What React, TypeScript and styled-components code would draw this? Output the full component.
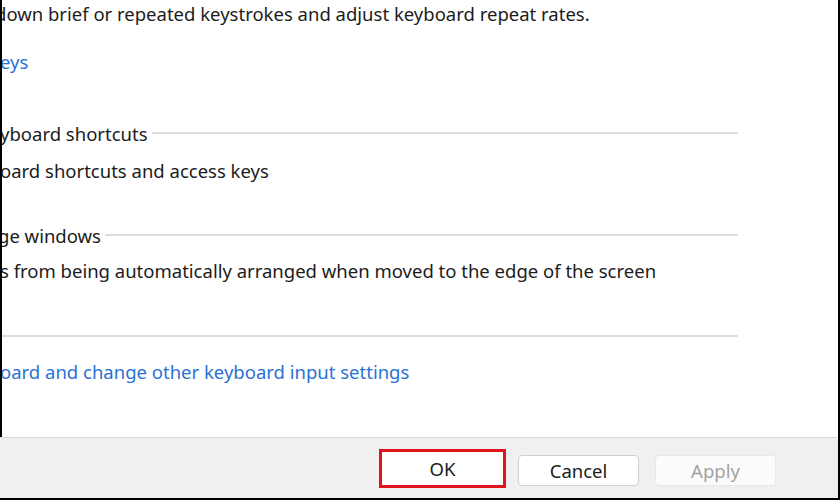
import React from "react";
import styled, { createGlobalStyle } from "styled-components";

const GlobalStyle = createGlobalStyle`
  html, body {
    margin: 0;
    padding: 0;
    background: #ffffff;
  }
  body {
    font-family: "Noto Sans", "Open Sans", sans-serif;
  }
`;

const Window = styled.div`
  width: 840px;
  height: 500px;
  box-sizing: border-box;
  display: flex;
  flex-direction: column;
  border-right: 2px solid #000;
  border-bottom: 2px solid #000;
  overflow: hidden;
`;

const Content = styled.div`
  flex: 1;
  display: flex;
  flex-direction: column;
  border-left: 2px solid #000;
  padding-right: 100px;
  overflow: hidden;
`;

const Line = styled.div<{ $mt: number; $cut?: number; $link?: boolean }>`
  margin-top: ${({ $mt }) => $mt}px;
  margin-left: ${({ $cut }) => -($cut ?? 0)}px;
  height: 24px;
  line-height: 24px;
  font-size: 18.5px;
  white-space: nowrap;
  color: ${({ $link }) => ($link ? "#2a72d4" : "#1c1c1c")};
`;

const Heading = styled.div<{ $mt: number; $cut?: number }>`
  margin-top: ${({ $mt }) => $mt}px;
  margin-left: ${({ $cut }) => -($cut ?? 0)}px;
  height: 24px;
  display: flex;
  align-items: center;
  gap: 4px;
  font-size: 18.5px;
  color: #1c1c1c;
  white-space: nowrap;
`;

const Rule = styled.div`
  flex: 1;
  height: 2px;
  background: #dcdcdc;
`;

const Footer = styled.div`
  height: 61px;
  flex-shrink: 0;
  box-sizing: border-box;
  background: #f0f0f0;
  border-top: 1px solid #dadada;
  display: flex;
  align-items: center;
  justify-content: flex-end;
  padding: 4px 62px 0 0;
  gap: 12px;
`;

const Button = styled.button<{ $focus?: boolean; $disabled?: boolean }>`
  font-family: "Noto Sans", "Open Sans", sans-serif;
  font-size: 18.5px;
  box-sizing: border-box;
  width: ${({ $focus }) => ($focus ? 127 : 121)}px;
  height: ${({ $focus }) => ($focus ? 39 : 31)}px;
  margin-top: ${({ $focus }) => ($focus ? -3 : 0)}px;
  margin-left: ${({ $disabled }) => ($disabled ? 4 : 0)}px;
  border-radius: ${({ $focus }) => ($focus ? 0 : 4)}px;
  background: ${({ $disabled }) => ($disabled ? "#fbfbfb" : "#ffffff")};
  border: ${({ $focus, $disabled }) =>
    $focus
      ? "3px solid #e0141c"
      : $disabled
      ? "1px solid #e8e8e8"
      : "1px solid #d0d0d0"};
  color: ${({ $disabled }) => ($disabled ? "#a2a2a2" : "#1c1c1c")};
  padding: 0;
`;

export default function App() {
  return (
    <>
      <GlobalStyle />
      <Window>
        <Content>
          <Line $mt={2} $cut={7}>
            down brief or repeated keystrokes and adjust keyboard repeat rates.
          </Line>
          <Line $mt={24} $cut={2} $link>
            eys
          </Line>
          <Heading $mt={47} $cut={2}>
            yboard shortcuts
            <Rule />
          </Heading>
          <Line $mt={14} $cut={2}>
            oard shortcuts and access keys
          </Line>
          <Heading $mt={40} $cut={4}>
            ge windows
            <Rule />
          </Heading>
          <Line $mt={12} $cut={2}>
            s from being automatically arranged when moved to the edge of the screen
          </Line>
          <Heading $mt={41}>
            <Rule />
          </Heading>
          <Line $mt={12} $cut={2} $link>
            oard and change other keyboard input settings
          </Line>
        </Content>
        <Footer>
          <Button $focus>OK</Button>
          <Button>Cancel</Button>
          <Button $disabled>Apply</Button>
        </Footer>
      </Window>
    </>
  );
}
